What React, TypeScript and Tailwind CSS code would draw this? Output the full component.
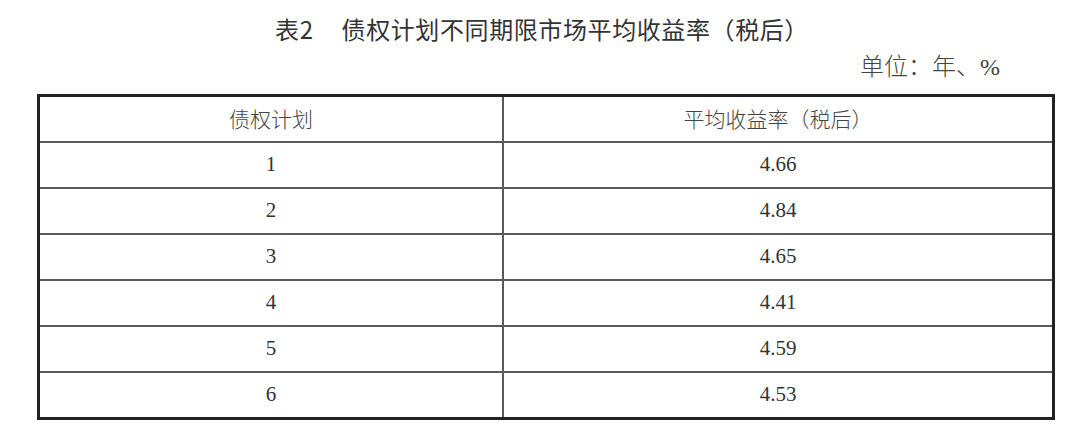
const rows = [
  { plan: '1', rate: '4.66' },
  { plan: '2', rate: '4.84' },
  { plan: '3', rate: '4.65' },
  { plan: '4', rate: '4.41' },
  { plan: '5', rate: '4.59' },
  { plan: '6', rate: '4.53' },
];

const serif = "font-['Liberation_Serif','Noto_Sans_CJK_SC',serif]";

export default function App() {
  return (
    <div className="h-[443px] w-[1080px] overflow-hidden bg-white">
      {/* Title */}
      <div className="flex justify-center pl-[4px] pt-[13px] font-['Noto_Sans_CJK_SC',sans-serif] text-[24px] font-normal leading-[32px] tracking-[0.6px] text-[#333]">
        <span>表2</span>
        <span className="ml-[28px]">债权计划不同期限市场平均收益率（税后）</span>
      </div>

      {/* Unit */}
      <div className={`mt-[6px] flex justify-end pr-[80px] ${serif} text-[24px] font-light leading-[32px] text-[#444]`}>
        单位：年、%
      </div>

      {/* Table */}
      <div className="ml-[37px] mt-[11px] w-[1018px] border-[3px] border-[#222]">
        <div className="grid h-[46px] grid-cols-[464px_1fr] border-b-2 border-[#5a5a5a]">
          <div className="flex items-center justify-center border-r-2 border-[#5a5a5a] font-['Noto_Sans_CJK_SC',sans-serif] text-[21px] font-light text-[#444]">
            债权计划
          </div>
          <div className="flex items-center justify-center font-['Noto_Sans_CJK_SC',sans-serif] text-[21px] font-light text-[#444]">
            平均收益率（税后）
          </div>
        </div>
        {rows.map((r, i) => (
          <div
            key={r.plan}
            className={`grid grid-cols-[464px_1fr] ${
              i < rows.length - 1 ? 'h-[46px] border-b-2 border-[#5a5a5a]' : 'h-[44px]'
            }`}
          >
            <div className={`flex items-center justify-center border-r-2 border-[#5a5a5a] ${serif} text-[21px] text-[#333]`}>
              {r.plan}
            </div>
            <div className={`flex items-center justify-center ${serif} text-[21px] text-[#333]`}>
              {r.rate}
            </div>
          </div>
        ))}
      </div>
    </div>
  );
}
